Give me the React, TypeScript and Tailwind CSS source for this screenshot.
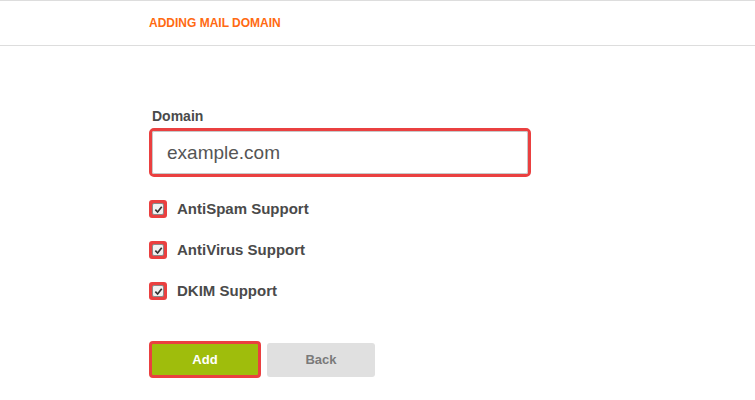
import React, { useState } from 'react';

// Mail domain add form with highlighted fields

const options = ['AntiSpam Support', 'AntiVirus Support', 'DKIM Support'];

const App: React.FC = () => {
  const [checked, setChecked] = useState<boolean[]>([true, true, true]);

  return (
    <div className="w-[755px] h-[400px] bg-white font-['Liberation_Sans',Arial,sans-serif] text-[#555]">
      <header className="h-[46px] border-t border-b border-[#dddddd] flex items-center pl-[149px]">
        <h1 className="text-[12px] font-bold text-[#ff6a12] tracking-[0px]">ADDING MAIL DOMAIN</h1>
      </header>

      <main className="pl-[149px] pt-[62px]">
        <label className="block pl-[3px] text-[14px] font-bold text-[#4a4a4a] leading-[16px]">Domain</label>
        <div className="mt-[4px] w-[382px] h-[49px] rounded-[5px] border-[3px] border-[#ea4040]">
          <input
            defaultValue="example.com"
            className="w-full h-full rounded-[2px] border border-[#c8c8c8] bg-white pl-[14px] text-[19px] text-[#555] outline-none"
          />
        </div>

        <div className="mt-[23px] flex flex-col gap-[23px]">
          {options.map((o, i) => (
            <label key={o} className="flex items-center gap-[10px] h-[18px] cursor-pointer">
              <span className="w-[18px] h-[18px] rounded-[3px] bg-[#ea4040] flex items-center justify-center">
                <span className="w-[12px] h-[12px] rounded-[2px] bg-[#f2f2f2] border border-[#8a8a8a] flex items-center justify-center">
                  {checked[i] && (
                    <svg width="9" height="9" viewBox="0 0 10 10">
                      <path d="M1.5 5.2 L4 7.8 L8.6 2" fill="none" stroke="#333" strokeWidth="1.9" />
                    </svg>
                  )}
                </span>
              </span>
              <input
                type="checkbox"
                className="hidden"
                checked={checked[i]}
                onChange={() => setChecked(c => c.map((v, j) => (j === i ? !v : v)))}
              />
              <span className="text-[15px] font-bold text-[#4a4a4a]">{o}</span>
            </label>
          ))}
        </div>

        <div className="mt-[41px] flex items-center gap-[6px]">
          <button className="w-[112px] h-[37px] rounded-[4px] border-[3px] border-[#ea4040] bg-[#9fbd0c] text-white text-[13px] font-bold">
            Add
          </button>
          <button className="w-[108px] h-[34px] rounded-[3px] bg-[#e0e0e0] text-[#7a7a7a] text-[13px] font-bold">
            Back
          </button>
        </div>
      </main>
    </div>
  );
};

export default App;
